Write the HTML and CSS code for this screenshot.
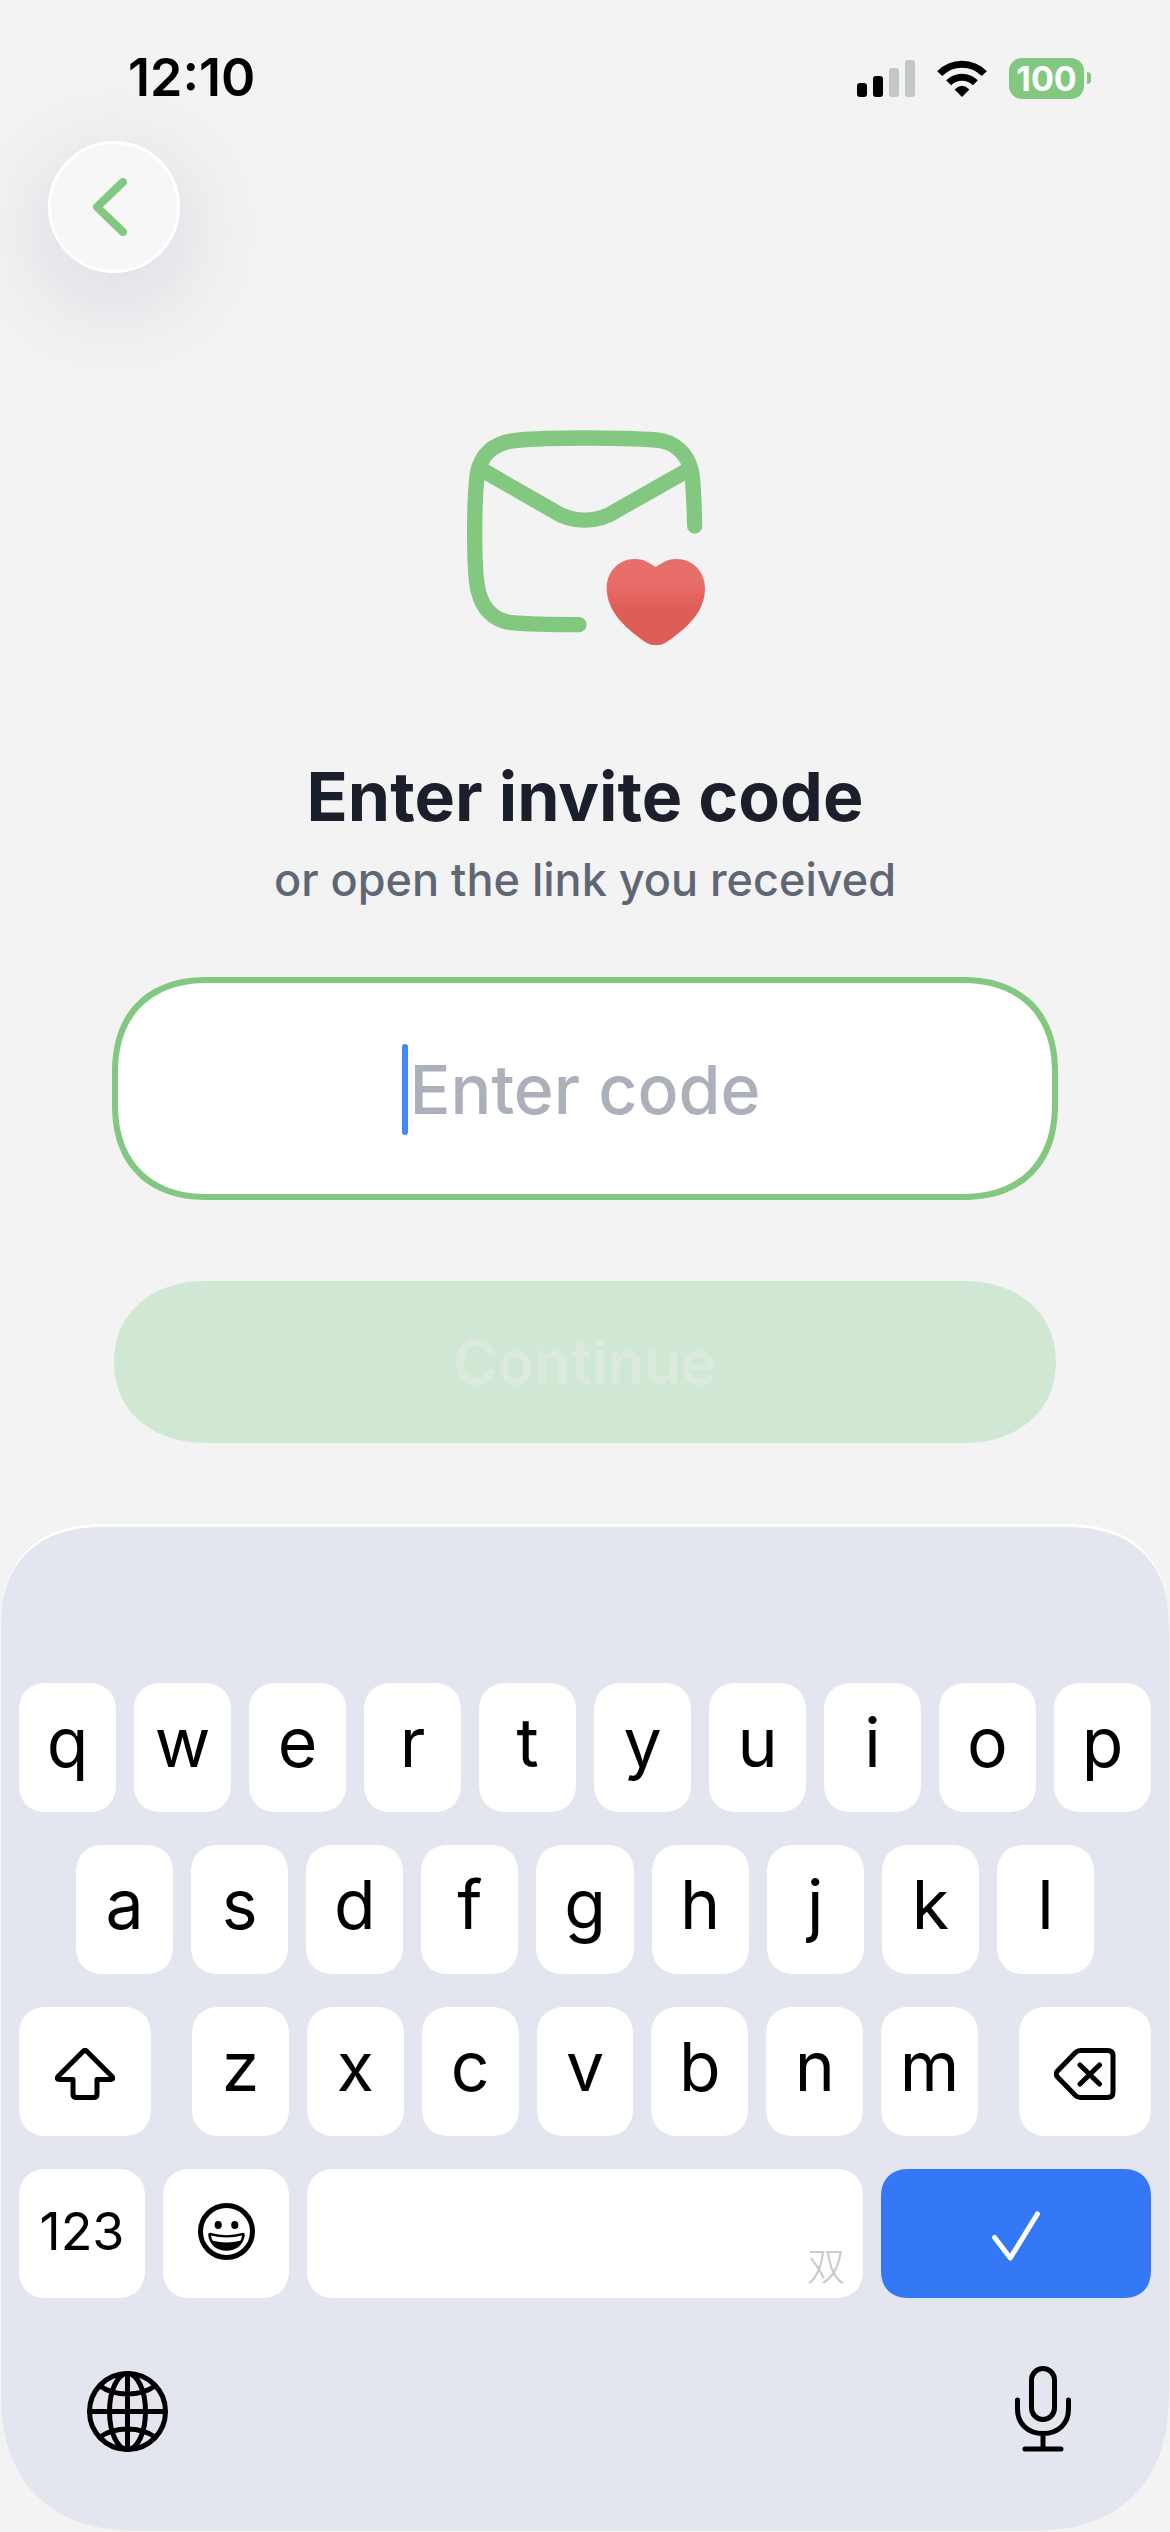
FILE: index.html
```html
<!DOCTYPE html>
<html lang="en">
<head>
  <meta charset="UTF-8" />
  <meta name="viewport" content="width=device-width, initial-scale=1.0"/>
  <title>Enter invite code</title>
  <link rel="stylesheet" href="styles.css">
</head>
<body>

  <div class="status-bar">
    <span class="time">12:10</span>
    <div class="status-icons">
      <svg class="signal" viewBox="0 0 58 37">
        <rect x="0" y="23" width="10" height="14" rx="3"/>
        <rect x="16" y="16" width="10" height="21" rx="3"/>
        <rect class="off" x="32" y="8" width="10" height="29" rx="3"/>
        <rect class="off" x="48" y="0" width="10" height="37" rx="3"/>
      </svg>
      <svg class="wifi" viewBox="0 0 50 37">
        <path d="M2.7 13.6A31 31 0 0 1 47.3 13.6M11.6 22.8A19 19 0 0 1 38.4 22.8" fill="none" stroke="#000" stroke-width="7"/>
        <path d="M17.6 29.4Q25 22 32.4 29.4L25 37Z"/>
      </svg>
      <div class="battery"><span class="battery-level">100</span></div>
    </div>
  </div>

  <header class="nav">
    <button class="back-button" aria-label="Back">
      <svg viewBox="0 0 34 58"><path d="M30 4L4 29L30 54"/></svg>
    </button>
  </header>

  <main>
    <svg class="invite-icon" viewBox="76 90 720 648">
      <defs>
        <linearGradient id="heart" x1="0" y1="0" x2="0" y2="1">
          <stop offset="0.25" stop-color="#e96d69"/>
          <stop offset="0.6" stop-color="#de5d56"/>
        </linearGradient>
      </defs>
      <g fill="none" stroke="#82c881" stroke-width="46" stroke-linecap="round">
        <path d="M765 378C763 300 762 250 755 212C742 160 705 125 650 120C580 115 500 114 435 114C370 114 290 115 230 121C165 127 125 160 113 220C107 270 105 340 105 395C105 470 106 530 115 570C128 625 160 662 215 668C280 674 340 674 418 674"/>
        <path d="M128 210L340 332C400 370 470 370 530 332L745 210"/>
      </g>
      <path fill="url(#heart)" d="M648 501C664 492 678 477 710 477C760 477 796 515 796 565C796 640 735 690 678 728C660 738 638 738 620 728C562 690 501 635 501 565C501 515 537 477 585 477C618 477 632 492 648 501Z"/>
    </svg>

    <h1>Enter invite code</h1>
    <p class="subtitle">or open the link you received</p>

    <form class="invite-form">
      <div class="code-field">
        <input type="text" id="code" placeholder="Enter code" aria-label="Invite code">
        <span class="caret"></span>
      </div>
      <button type="submit" class="continue-button" disabled>Continue</button>
    </form>
  </main>

  <div class="keyboard">
    <div class="keys">
      <div class="key-row">
        <button class="key">q</button>
        <button class="key">w</button>
        <button class="key">e</button>
        <button class="key">r</button>
        <button class="key">t</button>
        <button class="key">y</button>
        <button class="key">u</button>
        <button class="key">i</button>
        <button class="key">o</button>
        <button class="key">p</button>
      </div>
      <div class="key-row middle-row">
        <button class="key">a</button>
        <button class="key">s</button>
        <button class="key">d</button>
        <button class="key">f</button>
        <button class="key">g</button>
        <button class="key">h</button>
        <button class="key">j</button>
        <button class="key">k</button>
        <button class="key">l</button>
      </div>
      <div class="key-row letters-row">
        <button class="key icon-key" aria-label="Shift">
          <svg class="shift-icon" viewBox="0 0 60 52"><path d="M28.5 3L3 28.5Q1 31.5 4 31.5H18V46Q18 49.5 21.5 49.5H38.5Q42 49.5 42 46V31.5H56Q59 31.5 57 28.5L31.5 3Q30 1.6 28.5 3Z"/></svg>
        </button>
        <div class="letters">
          <button class="key">z</button>
          <button class="key">x</button>
          <button class="key">c</button>
          <button class="key">v</button>
          <button class="key">b</button>
          <button class="key">n</button>
          <button class="key">m</button>
        </div>
        <button class="key icon-key" aria-label="Delete">
          <svg class="delete-icon" viewBox="0 0 62 52"><path d="M26.5 2.5H53.5Q59 2.5 59 8V44Q59 49.5 53.5 49.5H26.5Q23.5 49.5 21.5 47.5L3.5 29Q1 26 3.5 23L21.5 4.5Q23.5 2.5 26.5 2.5ZM26 17L45.5 36M45.5 17L26 36"/></svg>
        </button>
      </div>
      <div class="key-row bottom-row">
        <button class="key number-key">123</button>
        <button class="key emoji-key" aria-label="Emoji">
          <svg class="emoji-icon" viewBox="0 0 57 57">
            <circle cx="28.5" cy="28.5" r="26" fill="none" stroke="#000" stroke-width="5"/>
            <ellipse cx="20.2" cy="22" rx="3.6" ry="4"/>
            <ellipse cx="36.8" cy="22" rx="3.6" ry="4"/>
            <path d="M12 29.8Q28.5 34.5 45 29.8Q47 29.8 46.7 33C45 42.5 38 47.8 28.5 47.8S12 42.5 10.3 33Q10 29.8 12 29.8Z"/>
            <path fill="#fff" d="M13 32.5Q28.5 36.5 44 32.5Q43.5 36 42.2 37.8Q28.5 41 14.8 37.8Q13.5 36 13 32.5Z"/>
          </svg>
        </button>
        <button class="key space-key" aria-label="Space">双</button>
        <button class="key icon-key done-key" aria-label="Done">
          <svg class="check-icon" viewBox="0 0 48 50"><path d="M2.6 26.5L18.3 47L45.4 3"/></svg>
        </button>
      </div>
    </div>

    <div class="keyboard-footer">
      <button class="footer-button" aria-label="Next keyboard">
        <svg class="globe-icon" viewBox="0 0 81 81">
          <circle cx="40.5" cy="40.5" r="38"/>
          <ellipse cx="40.5" cy="40.5" rx="18" ry="38"/>
          <path d="M40.5 2.5V78.5M2.5 40.5H78.5M12.7 14.8Q24 23 40.5 23T68.3 14.8M12.7 66.2Q24 58 40.5 58T68.3 66.2"/>
        </svg>
      </button>
      <button class="footer-button" aria-label="Dictation">
        <svg class="mic-icon" viewBox="0 0 56 86">
          <rect x="16.5" y="2.5" width="23" height="51" rx="11.5"/>
          <path d="M2.5 34V43C2.5 57 12 67.5 28 67.5S53.5 57 53.5 43V34M28 67.5V83M10 83H46"/>
        </svg>
      </button>
    </div>
  </div>

</body>
</html>
```

FILE: styles.css
```css
* {
  box-sizing: border-box;
}

body {
  font-family: Inter, 'Noto Sans CJK SC', sans-serif;
  background-color: #f3f3f3;
  color: #000000;
  margin: 0;
}

button {
  font-family: inherit;
  border: none;
  padding: 0;
  cursor: pointer;
}

svg {
  display: block;
}

/* Status bar */
.status-bar {
  display: flex;
  justify-content: space-between;
  align-items: center;
  padding: 48px 79px 0 128px;
  line-height: 60px;
}

.time {
  font-size: 52px;
  font-weight: 600;
}

.status-icons {
  display: flex;
  align-items: center;
  gap: 22px;
}

.signal {
  width: 58px;
  height: 37px;
}

.signal .off {
  fill: #c4c7c8;
}

.wifi {
  width: 50px;
  height: 37px;
}

.battery {
  display: flex;
  align-items: center;
  gap: 3px;
}

.battery-level {
  width: 75px;
  height: 41px;
  line-height: 41px;
  border-radius: 13px;
  background: #82c881;
  color: #ffffff;
  font-size: 34px;
  font-weight: 700;
  text-align: center;
}

.battery::after {
  content: "";
  width: 4px;
  height: 12px;
  border-radius: 0 4px 4px 0;
  background: #82c881;
}

/* Back button */
.nav {
  padding: 33px 48px 0;
}

.back-button {
  display: flex;
  align-items: center;
  justify-content: center;
  width: 132px;
  height: 132px;
  padding-right: 8px;
  border: 3px solid #ffffff;
  border-radius: 50%;
  background: #f7f7f7;
  box-shadow: 0 24px 100px rgba(90, 90, 150, 0.2);
}

.back-button svg {
  width: 34px;
  height: 58px;
  fill: none;
  stroke: #82c881;
  stroke-width: 8;
  stroke-linecap: round;
  stroke-linejoin: round;
}

/* Invite form */
main {
  padding: 157px 112px 81px;
  text-align: center;
}

.invite-icon {
  width: 240px;
  height: 216px;
  margin: 0 auto;
}

h1 {
  margin: 108px 0 0;
  font-size: 68px;
  line-height: 84px;
  font-weight: 700;
  color: #1b1f2b;
}

.subtitle {
  margin: 14px 0 0;
  font-size: 45px;
  line-height: 56px;
  font-weight: 500;
  color: #5f6775;
}

.code-field {
  position: relative;
  margin-top: 69px;
}

.code-field input {
  display: block;
  width: 100%;
  height: 223px;
  padding: 0 24px;
  border: 6px solid #82c881;
  border-radius: 80px;
  background: #ffffff;
  font-family: inherit;
  font-size: 68px;
  font-weight: 500;
  text-align: center;
  outline: none;
}

.code-field input::placeholder {
  color: #abb0ba;
  opacity: 1;
}

/* Text cursor drawn in front of the placeholder */
.caret {
  position: absolute;
  top: 67px;
  left: calc(50% - 183px);
  width: 6px;
  height: 91px;
  border-radius: 3px;
  background: #4287f5;
}

.continue-button {
  display: block;
  width: calc(100% - 4px);
  height: 162px;
  margin: 81px auto 0;
  border-radius: 81px;
  background: #d0e8d3;
  color: #dceade;
  font-size: 60px;
  font-weight: 600;
}

/* Keyboard */
.keyboard {
  margin: 0 1px 1px;
  padding-top: 156px;
  border-top: 3px solid #ffffff;
  border-radius: 86px 86px 120px 120px;
  background: #e3e5ef;
}

.keys {
  display: flex;
  flex-direction: column;
  gap: 33px;
  padding: 0 18px;
}

.key-row, .letters {
  display: flex;
  gap: 18px;
}

.middle-row {
  padding: 0 57px;
}

.letters-row {
  display: grid;
  grid-template-columns: 132fr 786fr 132fr;
  gap: 41px;
}

.bottom-row {
  display: grid;
  grid-template-columns: 126fr 126fr 556fr 270fr;
}

.key {
  flex: 1;
  min-width: 0;
  height: 129px;
  padding-bottom: 12px;
  border-radius: 26px;
  background: #ffffff;
  color: #000000;
  font-size: 68px;
}

.icon-key, .emoji-key {
  display: flex;
  align-items: center;
  justify-content: center;
}

.icon-key {
  padding: 4px 0 0;
}

.number-key, .emoji-key {
  padding-bottom: 4px;
  font-size: 52px;
}

.space-key {
  padding: 60px 18px 0 0;
  color: #c6c7ca;
  font-size: 38px;
  font-weight: 300;
  text-align: right;
}

.done-key {
  background: #3478f6;
}

.shift-icon, .delete-icon, .check-icon, .globe-icon, .mic-icon {
  fill: none;
  stroke: #000000;
  stroke-width: 5;
  stroke-linecap: round;
  stroke-linejoin: round;
}

.shift-icon {
  width: 60px;
  height: 52px;
}

.delete-icon {
  width: 62px;
  height: 52px;
}

.emoji-icon {
  width: 57px;
  height: 57px;
}

.check-icon {
  width: 48px;
  height: 50px;
  stroke: #ffffff;
}

.keyboard-footer {
  display: flex;
  justify-content: space-between;
  align-items: flex-end;
  padding: 68px 98px 79px 86px;
}

.footer-button {
  background: none;
}

.globe-icon {
  width: 81px;
  height: 81px;
}

.mic-icon {
  width: 56px;
  height: 86px;
}

/* Smoother continuous corners where the browser has them */
@supports (corner-shape: squircle) {
  .code-field input {
    border-radius: 96px;
    corner-shape: superellipse(1.2);
  }

  .continue-button {
    border-radius: 92px / 81px;
    corner-shape: superellipse(1.1);
  }

  .keyboard {
    border-radius: 104px 104px 140px 140px;
    corner-shape: superellipse(1.25);
  }

  .key {
    border-radius: 28px;
    corner-shape: superellipse(1.2);
  }
}
```
